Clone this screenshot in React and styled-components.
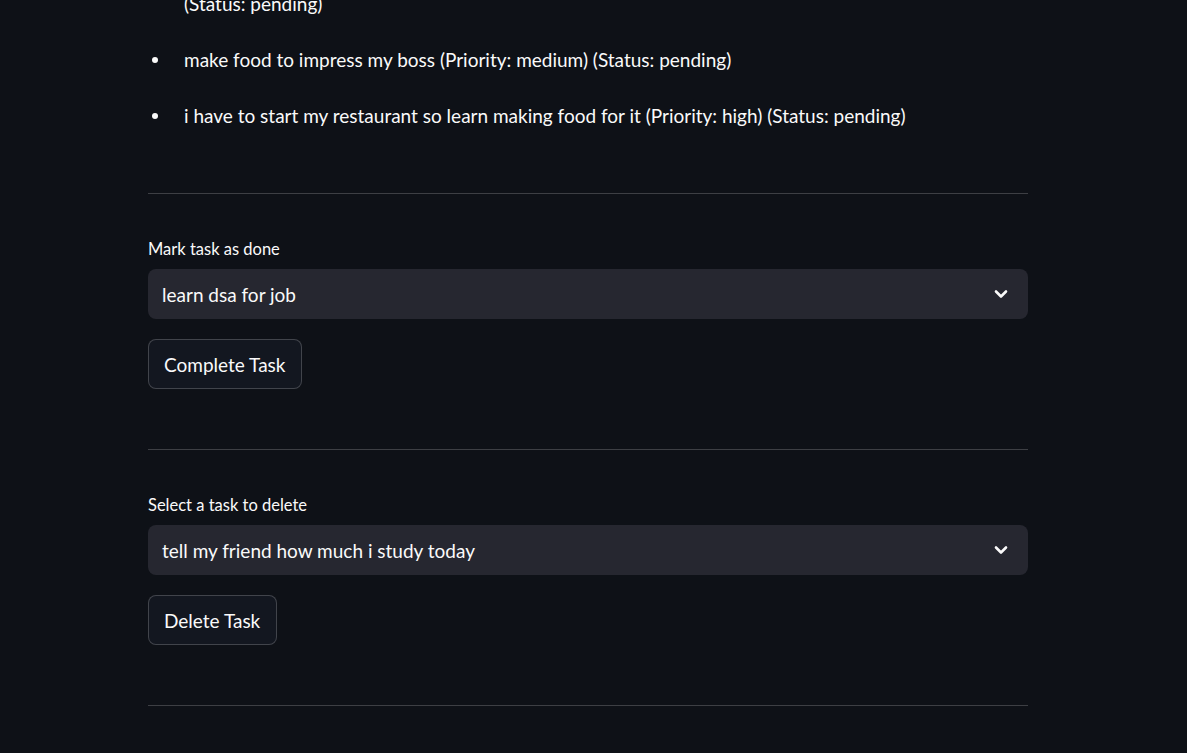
import styled, { createGlobalStyle } from "styled-components";

const Colors = {
  Page: "#0e1117",
  Field: "#262730",
  Button: "rgb(19, 23, 32)",
  Text: "#fafafa",
  Line: "rgba(250, 250, 250, 0.2)",
};

const GlobalStyle = createGlobalStyle`
  html, body {
    margin: 0;
    padding: 0;
    background: ${Colors.Page};
    overflow: hidden;
  }
  body {
    font-family: Lato, "Liberation Sans", sans-serif;
    color: ${Colors.Text};
  }
`;

const Page = styled.main`
  width: 100%;
  height: 753px;
  overflow: hidden;
  background: ${Colors.Page};
`;

// the page is scrolled: the first task's opening line sits above the fold
const Column = styled.div`
  width: 880px;
  margin: -41px 0 0 148px;
  display: flex;
  flex-direction: column;
`;

const List = styled.ul`
  margin: 0;
  padding: 0;
  list-style: none;
  display: flex;
  flex-direction: column;
  gap: 26px;
`;

const Item = styled.li`
  display: grid;
  grid-template-columns: 36px 1fr;
  font-size: 19px;
  line-height: 30px;
`;

const Bullet = styled.span`
  width: 6px;
  height: 6px;
  margin: 12px 0 0 4px;
  border-radius: 50%;
  background: ${(p) => (p.$hidden ? "transparent" : Colors.Text)};
`;

const Divider = styled.hr`
  width: 100%;
  margin: ${(p) => p.$top}px 0 0 0;
  border: none;
  border-top: 1px solid ${Colors.Line};
  height: 0;
`;

const Section = styled.section`
  display: flex;
  flex-direction: column;
  align-items: flex-start;
  padding-top: 44px;
`;

const Label = styled.label`
  font-size: 16.5px;
  line-height: 22px;
  margin-bottom: 9px;
`;

const Select = styled.div`
  width: 100%;
  height: 50px;
  box-sizing: border-box;
  background: ${Colors.Field};
  border-radius: 8px;
  display: flex;
  align-items: center;
  justify-content: space-between;
  padding: 0 20px 0 14px;
  font-size: 19px;
`;

const Button = styled.button`
  margin-top: 20px;
  height: 50px;
  box-sizing: border-box;
  padding: 0 16px 0 15px;
  background: ${Colors.Button};
  color: ${Colors.Text};
  border: 1px solid ${Colors.Line};
  border-radius: 8px;
  font-family: inherit;
  font-size: 19px;
`;

const Chevron = () => (
  <svg width="14" height="10" viewBox="0 0 14 10" fill="none">
    <path d="M2 2.5L7 7.5L12 2.5" stroke="#fafafa" strokeWidth="2.6" strokeLinecap="round" strokeLinejoin="round" />
  </svg>
);

const tasks = [
  ["learn dsa for job so i can get a good package (Priority: high)", "(Status: pending)"],
  ["make food to impress my boss (Priority: medium) (Status: pending)"],
  ["i have to start my restaurant so learn making food for it (Priority: high) (Status: pending)"],
];

function TaskForm({ label, value, action }) {
  return (
    <Section>
      <Label>{label}</Label>
      <Select>
        <span>{value}</span>
        <Chevron />
      </Select>
      <Button>{action}</Button>
    </Section>
  );
}

export default function App() {
  return (
    <Page>
      <GlobalStyle />
      <Column>
        <List>
          {tasks.map((lines, i) => (
            <Item key={i}>
              <Bullet $hidden={i === 0} />
              <span>
                {lines.map((line, j) => (
                  <span key={j}>
                    {j > 0 && <br />}
                    {line}
                  </span>
                ))}
              </span>
            </Item>
          ))}
        </List>
        <Divider $top={62} />
        <TaskForm label="Mark task as done" value="learn dsa for job" action="Complete Task" />
        <Divider $top={60} />
        <TaskForm label="Select a task to delete" value="tell my friend how much i study today" action="Delete Task" />
        <Divider $top={60} />
      </Column>
    </Page>
  );
}
